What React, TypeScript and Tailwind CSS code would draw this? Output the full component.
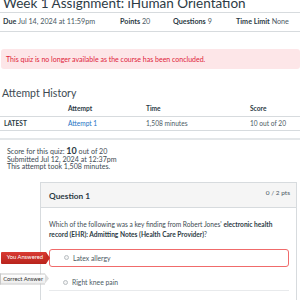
import type { ReactNode } from "react";

const FONT = "font-['Lato','Liberation_Sans',sans-serif]";

function MetaItem({ label, value }: { label: string; value: string }) {
  return (
    <span className="whitespace-nowrap">
      <span className="font-bold">{label}</span> <span className="text-[#4b5a64]">{value}</span>
    </span>
  );
}

function AnswerTag({ kind, children }: { kind: "wrong" | "correct"; children: ReactNode }) {
  const red = kind === "wrong";
  return (
    <div className="absolute left-[-49px] top-1/2 flex -translate-y-1/2 items-center">
      <div
        className={
          red
            ? "flex h-[12px] w-[45px] items-center justify-end rounded-l-[1px] bg-gradient-to-b from-[#d93a32] to-[#b8231c] pr-[3px] text-[5.8px] text-white"
            : "flex h-[11px] w-[45px] items-center justify-end border border-r-0 border-[#c8c8c8] bg-gradient-to-b from-[#ffffff] to-[#ececec] pr-[2px] text-[5.8px] text-[#333]"
        }
      >
        {children}
      </div>
      <div
        className={
          red
            ? "h-0 w-0 border-y-[6px] border-l-[4px] border-y-transparent border-l-[#c52b23]"
            : "h-0 w-0 border-y-[5.5px] border-l-[4px] border-y-transparent border-l-[#dcdcdc]"
        }
      />
    </div>
  );
}

function Radio() {
  return <span className="h-[5px] w-[5px] rounded-full border border-[#b9bec2] bg-[#f4f4f4]" />;
}

export default function App() {
  return (
    <div className={`h-[300px] w-[300px] overflow-hidden bg-white text-[#2d3b45] ${FONT}`}>
      <div className="-mt-[5px] border-b border-[#d7dbde] pl-[3px] text-[13.5px] leading-[17px] whitespace-nowrap">
        Week 1 Assignment: iHuman Orientation
      </div>

      <div className="grid h-[19px] grid-cols-[117px_53px_63px_1fr] items-center border-b border-[#d7dbde] pl-[3px] text-[7.2px]">
        <MetaItem label="Due" value="Jul 14, 2024 at 11:59pm" />
        <MetaItem label="Points" value="20" />
        <MetaItem label="Questions" value="9" />
        <MetaItem label="Time Limit" value="None" />
      </div>

      <div className="mt-[17px] ml-[1px] flex h-[20px] items-center rounded-[3px] bg-[#fde6e8] pl-[5px] text-[7px] text-[#e0223a] whitespace-nowrap">
        This quiz is no longer available as the course has been concluded.
      </div>

      <h2 className="mt-[17px] pl-[2px] text-[10.5px] leading-[14px] text-[#3d4a52]">Attempt History</h2>

      <div className="mt-[2px] text-[6.6px]">
        <div className="grid h-[15px] grid-cols-[64px_78px_104px_1fr] items-center border-b border-[#d7dbde] pl-[4px] font-bold">
          <span />
          <span>Attempt</span>
          <span>Time</span>
          <span>Score</span>
        </div>
        <div className="grid h-[14px] grid-cols-[64px_78px_104px_1fr] items-center border-b border-[#d7dbde] pl-[4px]">
          <span className="font-bold">LATEST</span>
          <span className="text-[#2273c4]">Attempt 1</span>
          <span className="text-[#4b5a64]">1,508 minutes</span>
          <span className="text-[#4b5a64]">10 out of 20</span>
        </div>
        <div className="mt-[7px] h-[2px] bg-[#e4e7e9]" />
      </div>

      <div className="mt-[7px] pl-[7px] text-[7.1px] leading-[7.6px] text-[#3d4a52] whitespace-nowrap">
        <div>
          Score for this quiz: <span className="text-[9px] font-bold text-[#2d3b45]">10</span> out of 20
        </div>
        <div>Submitted Jul 12, 2024 at 12:37pm</div>
        <div>This attempt took 1,508 minutes.</div>
      </div>

      <div className="ml-[40px] mt-[11px] w-[257px] border border-[#d7dbde]">
        <div className="flex h-[25px] items-start justify-between border-b border-[#d7dbde] bg-[#f5f5f5] pl-[8px] pr-[6px]">
          <span className="mt-[8px] text-[8.3px] font-bold leading-[11px]">Question 1</span>
          <span className="mt-[6px] text-[6.5px] leading-[8px] text-[#4b5a64]">0 / 2 pts</span>
        </div>
        <div className="pb-[20px] pl-[8px] pr-[7px] pt-[11px]">
          <p className="text-[6.6px] leading-[10px] text-[#3d4a52]">
            Which of the following was a key finding from Robert Jones'{" "}
            <span className="font-bold text-[#2d3b45]">electronic health record (EHR): Admitting Notes (Health Care Provider)</span>?
          </p>

          <div className="relative mt-[10px] flex h-[18px] items-center gap-[4px] rounded-[3px] border border-[#f06b6b] pl-[14px] text-[6.8px] text-[#4b5a64]">
            <AnswerTag kind="wrong">You Answered</AnswerTag>
            <Radio />
            Latex allergy
          </div>

          <div className="relative flex h-[24px] items-center gap-[4px] border-b border-[#e8eaec] pl-[14px] pt-[8px] text-[6.8px] text-[#4b5a64]">
            <div className="absolute left-0 top-[12px]">
              <div className="relative">
                <AnswerTag kind="correct">Correct Answer</AnswerTag>
              </div>
            </div>
            <Radio />
            Right knee pain
          </div>

          <div className="flex h-[17px] items-center gap-[4px] pl-[14px] pt-[10px] text-[6.8px] text-[#4b5a64]">
            <Radio />
            Dementia with chronic pain
          </div>
        </div>
      </div>
    </div>
  );
}
